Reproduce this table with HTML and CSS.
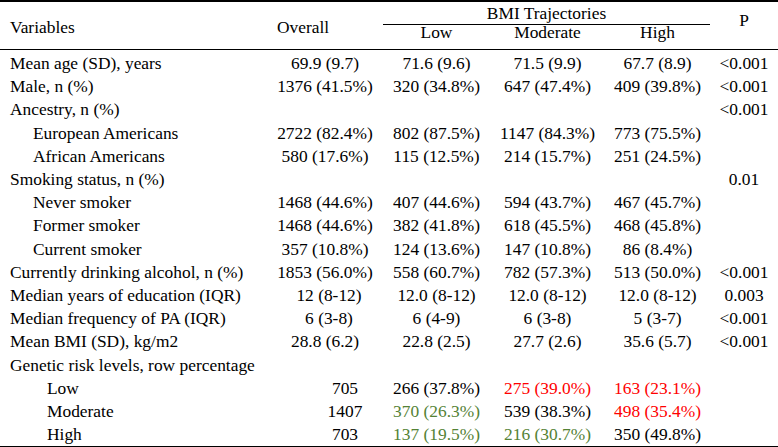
FILE: index.html
```html
<!DOCTYPE html>
<html>
<head>
<meta charset="utf-8">
<link rel="stylesheet" href="styles.css">
</head>
<body>
<table class="t">
  <colgroup>
    <col class="c-var"><col class="c-all"><col class="c-low"><col class="c-mod"><col class="c-high"><col class="c-p">
  </colgroup>
  <thead>
    <tr class="h1">
      <th rowspan="2" class="var">Variables</th>
      <th rowspan="2" class="overall">Overall</th>
      <th colspan="3" class="grp">BMI Trajectories</th>
      <th rowspan="2" class="p">P</th>
    </tr>
    <tr class="h2">
      <th>Low</th><th>Moderate</th><th>High</th>
    </tr>
  </thead>
  <tbody>
    <tr class="first"><td class="var">Mean age (SD), years</td><td>69.9 (9.7)</td><td>71.6 (9.6)</td><td>71.5 (9.9)</td><td>67.7 (8.9)</td><td>&lt;0.001</td></tr>
    <tr><td class="var">Male, n (%)</td><td>1376 (41.5%)</td><td>320 (34.8%)</td><td>647 (47.4%)</td><td>409 (39.8%)</td><td>&lt;0.001</td></tr>
    <tr><td class="var">Ancestry, n (%)</td><td></td><td></td><td></td><td></td><td>&lt;0.001</td></tr>
    <tr><td class="var ind1">European Americans</td><td>2722 (82.4%)</td><td>802 (87.5%)</td><td>1147 (84.3%)</td><td>773 (75.5%)</td><td></td></tr>
    <tr><td class="var ind1">African Americans</td><td>580 (17.6%)</td><td>115 (12.5%)</td><td>214 (15.7%)</td><td>251 (24.5%)</td><td></td></tr>
    <tr><td class="var">Smoking status, n (%)</td><td></td><td></td><td></td><td></td><td>0.01</td></tr>
    <tr><td class="var ind1">Never smoker</td><td>1468 (44.6%)</td><td>407 (44.6%)</td><td>594 (43.7%)</td><td>467 (45.7%)</td><td></td></tr>
    <tr><td class="var ind1">Former smoker</td><td>1468 (44.6%)</td><td>382 (41.8%)</td><td>618 (45.5%)</td><td>468 (45.8%)</td><td></td></tr>
    <tr><td class="var ind1">Current smoker</td><td>357 (10.8%)</td><td>124 (13.6%)</td><td>147 (10.8%)</td><td>86 (8.4%)</td><td></td></tr>
    <tr><td class="var">Currently drinking alcohol, n (%)</td><td>1853 (56.0%)</td><td>558 (60.7%)</td><td>782 (57.3%)</td><td>513 (50.0%)</td><td>&lt;0.001</td></tr>
    <tr><td class="var">Median years of education (IQR)</td><td class="nudge">12 (8-12)</td><td>12.0 (8-12)</td><td>12.0 (8-12)</td><td>12.0 (8-12)</td><td>0.003</td></tr>
    <tr><td class="var">Median frequency of PA (IQR)</td><td class="nudge">6 (3-8)</td><td>6 (4-9)</td><td>6 (3-8)</td><td>5 (3-7)</td><td>&lt;0.001</td></tr>
    <tr><td class="var">Mean BMI (SD), kg/m2</td><td>28.8 (6.2)</td><td>22.8 (2.5)</td><td>27.7 (2.6)</td><td>35.6 (5.7)</td><td>&lt;0.001</td></tr>
    <tr><td class="var">Genetic risk levels, row percentage</td><td></td><td></td><td></td><td></td><td></td></tr>
    <tr><td class="var ind2">Low</td><td class="num">705</td><td>266 (37.8%)</td><td class="red">275 (39.0%)</td><td class="red">163 (23.1%)</td><td></td></tr>
    <tr><td class="var ind2">Moderate</td><td class="num">1407</td><td class="green">370 (26.3%)</td><td>539 (38.3%)</td><td class="red">498 (35.4%)</td><td></td></tr>
    <tr><td class="var ind2">High</td><td class="num">703</td><td class="green">137 (19.5%)</td><td class="green">216 (30.7%)</td><td>350 (49.8%)</td><td></td></tr>
  </tbody>
</table>
</body>
</html>
```

FILE: styles.css
```css
html, body {
  margin: 0;
  padding: 0;
  background: #ffffff;
}
body {
  font-family: "Liberation Serif", "Times New Roman", serif;
  font-size: 17.4px;
  color: #000000;
}
.t {
  width: 778px;
  border-collapse: collapse;
  table-layout: fixed;
  border-top: 2px solid #000;
  border-bottom: 2px solid #000;
}
.c-var { width: 267px; }
.c-all { width: 116px; }
.c-low { width: 107px; }
.c-mod { width: 115px; }
.c-high { width: 105px; }
.c-p { width: 68px; }

th {
  font-weight: normal;
  text-align: center;
  padding: 0;
  white-space: nowrap;
}
thead tr.h1 th { height: 22px; line-height: 22px; vertical-align: middle; }
thead tr.h2 th {
  height: 24px;
  line-height: 14px;
  vertical-align: top;
  border-bottom: 1.5px solid #000;
}
thead th.var { text-align: left; padding-left: 10px; padding-top: 3px; }
thead th.overall { padding-right: 44px; padding-top: 3px; }
thead tr.h1 th.p { vertical-align: top; padding-top: 7px; }
thead th.grp { border-bottom: 1px solid #000; }
thead th[rowspan] { border-bottom: 1.5px solid #000; }

td {
  padding: 0;
  height: 23.2px;
  line-height: 23.2px;
  text-align: center;
  white-space: nowrap;
}
tbody tr.first td { padding-top: 2px; }
td.var { text-align: left; padding-left: 10px; }
td.ind1 { padding-left: 33px; }
td.ind2 { padding-left: 47px; }
td.num { padding-left: 40px; }
td.nudge { padding-left: 8px; }
.red { color: #ff0000; }
.green { color: #548235; }
```
